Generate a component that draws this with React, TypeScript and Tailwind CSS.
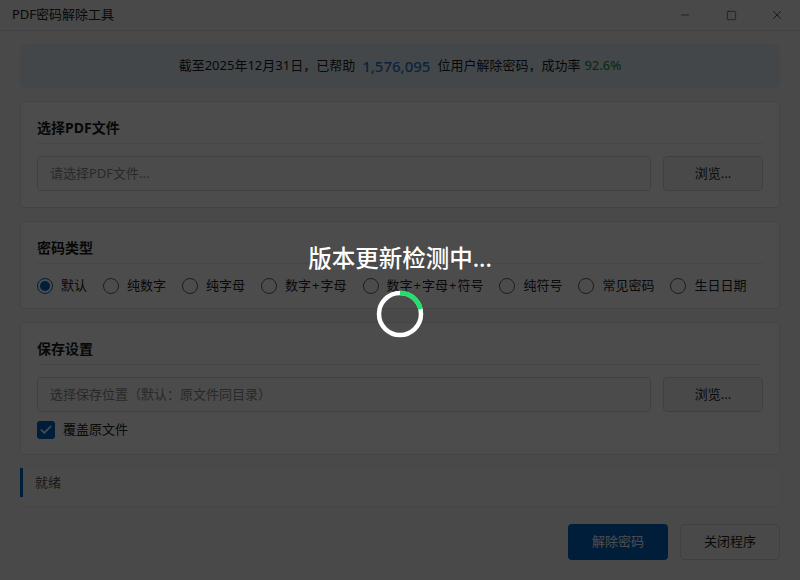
import { Minus, Square, X, Check } from 'lucide-react'

const FONT = { fontFamily: '"Noto Sans", "Noto Sans CJK SC", sans-serif' }

const types = ['默认', '纯数字', '纯字母', '数字+字母', '数字+字母+符号', '纯符号', '常见密码', '生日日期']

const Card = ({ title, children, className }: { title: string; children: React.ReactNode; className?: string }) => (
  <div className={'rounded-[4px] border border-[#e2e2e2] bg-white px-4 ' + (className ?? '')}>
    <div className="border-b border-[#ececec] pb-[5px] text-[14px] leading-5 font-bold text-[#1a1a1a]">{title}</div>
    {children}
  </div>
)

const App = () => {
  return (
    <div className="relative h-[580px] w-[800px] overflow-hidden bg-[#f3f3f3] text-[13px] text-[#1a1a1a]" style={FONT}>
      {/* 标题栏 */}
      <div className="flex h-[31px] items-center justify-between border-b border-[#dcdcdc] pl-3">
        <span className="text-[13px] text-[#222]">PDF密码解除工具</span>
        <div className="flex h-full items-center">
          <div className="flex w-[46px] justify-center">
            <Minus size={12} strokeWidth={1.2} />
          </div>
          <div className="flex w-[46px] justify-center">
            <Square size={11} strokeWidth={1.2} />
          </div>
          <div className="flex w-[46px] justify-center">
            <X size={14} strokeWidth={1.2} />
          </div>
        </div>
      </div>

      <div className="flex flex-col px-5">
        {/* 统计横幅 */}
        <div className="mt-[13px] flex h-[44px] items-center justify-center rounded-[6px] bg-[#e4eef8] text-[13px]">
          <span>截至2025年12月31日，已帮助</span>
          <span className="mx-[7px] text-[15px] font-medium text-[#1d78c8]">1,576,095</span>
          <span>位用户解除密码，成功率</span>
          <span className="ml-1 font-medium text-[#1f9a3a]">92.6%</span>
        </div>

        {/* 选择文件 */}
        <Card title="选择PDF文件" className="mt-[13px] h-[107px] pt-[16px]">
          <div className="mt-[12px] flex gap-3">
            <div className="flex h-[35px] flex-1 items-center rounded-[4px] border border-[#d6d6d6] bg-[#fafafa] px-3 text-[#8a8a8a]">
              请选择PDF文件...
            </div>
            <button className="h-[35px] w-[100px] rounded-[4px] border border-[#d6d6d6] bg-[#f6f6f6] text-[#222]">浏览...</button>
          </div>
        </Card>

        {/* 密码类型 */}
        <Card title="密码类型" className="mt-[13px] h-[88px] pt-[16px]">
          <div className="mt-[12px] flex items-center gap-4">
            {types.map((t, i) => (
              <label key={t} className="flex items-center gap-2">
                <span
                  className={
                    'flex h-4 w-4 items-center justify-center rounded-full border ' +
                    (i === 0 ? 'border-[#0067c0]' : 'border-[#666] bg-white')
                  }
                >
                  {i === 0 && <span className="h-[10px] w-[10px] rounded-full bg-[#0067c0]" />}
                </span>
                <span className="text-[#222]">
                  {t.split('+').map((part, j) => (
                    <span key={j}>
                      {j > 0 && <span className="mx-px">+</span>}
                      {part}
                    </span>
                  ))}
                </span>
              </label>
            ))}
          </div>
        </Card>

        {/* 保存设置 */}
        <Card title="保存设置" className="mt-[13px] h-[133px] pt-[16px]">
          <div className="mt-[12px] flex gap-3">
            <div className="flex h-[35px] flex-1 items-center rounded-[4px] border border-[#d6d6d6] bg-[#fafafa] px-3 text-[#8a8a8a]">
              选择保存位置（默认：原文件同目录）
            </div>
            <button className="h-[35px] w-[100px] rounded-[4px] border border-[#d6d6d6] bg-[#f6f6f6] text-[#222]">浏览...</button>
          </div>
          <label className="mt-[8px] flex items-center gap-2">
            <span className="flex h-[18px] w-[18px] items-center justify-center rounded-[3px] bg-[#0067c0]">
              <Check size={14} strokeWidth={3} className="text-white" />
            </span>
            <span className="text-[#222]">覆盖原文件</span>
          </label>
        </Card>

        {/* 状态栏 */}
        <div className="mt-[13px] h-[39px] rounded-[3px] border-b border-[#e6e6e6] bg-[#f7f7f7]">
          <div className="flex h-[29px] items-center border-l-[3px] border-[#0067c0] pl-3 text-[#555]">就绪</div>
        </div>

        {/* 底部按钮 */}
        <div className="mt-[17px] flex justify-end gap-3">
          <button className="h-[36px] w-[100px] rounded-[4px] bg-[#0067c0] text-white">解除密码</button>
          <button className="h-[36px] w-[100px] rounded-[4px] border border-[#d6d6d6] bg-[#f6f6f6] text-[#222]">关闭程序</button>
        </div>
      </div>

      {/* 加载遮罩 */}
      <div className="absolute inset-0 flex flex-col items-center justify-center bg-black/70 pt-[2px]">
        <div className="mb-[16px] text-[23.5px] leading-[30px] font-medium text-white">版本更新检测中...</div>
        <svg width="50" height="50" viewBox="0 0 50 50">
          <circle cx="25" cy="25" r="21" fill="none" stroke="#ffffff" strokeWidth="4.5" />
          <circle
            cx="25"
            cy="25"
            r="21"
            fill="none"
            stroke="#1ee06a"
            strokeWidth="4.5"
            strokeDasharray="28 200"
            transform="rotate(-90 25 25)"
          />
        </svg>
      </div>
    </div>
  )
}

export default App
